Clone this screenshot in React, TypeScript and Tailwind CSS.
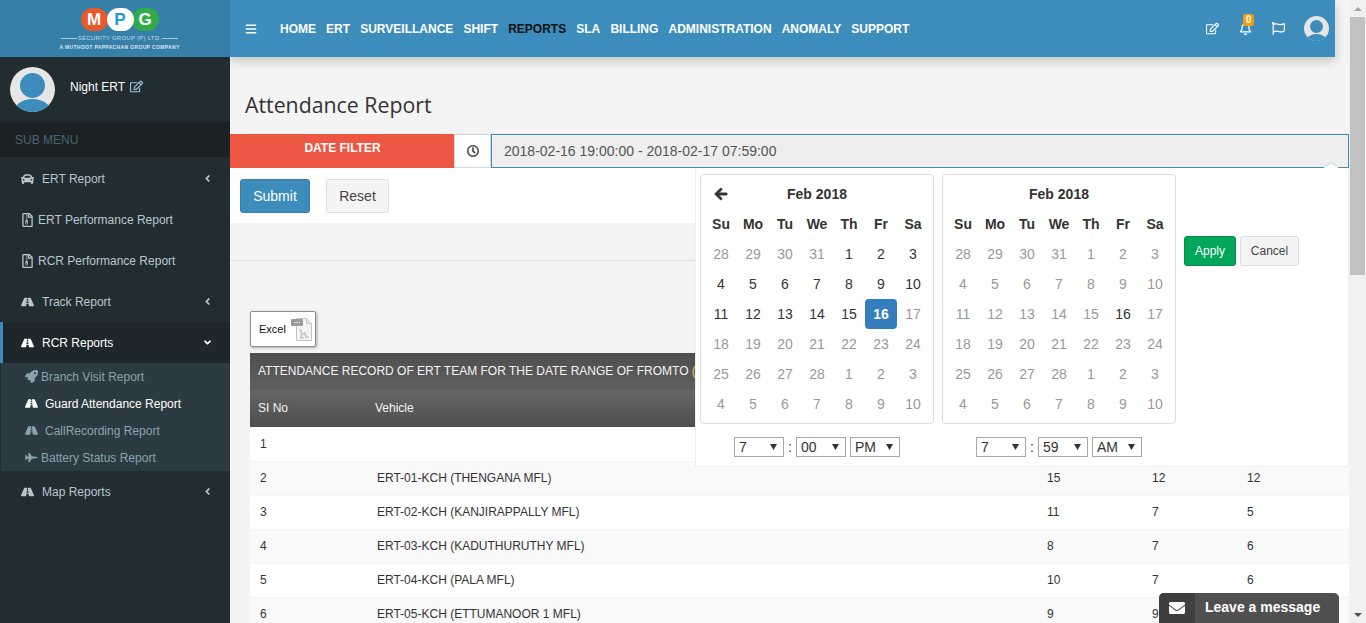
import {
  FaAngleDown,
  FaAngleLeft,
  FaArrowLeft,
  FaBars,
  FaCar,
  FaEnvelope,
  FaFighterJet,
  FaRegBell,
  FaRegClock,
  FaRegEdit,
  FaRegFileArchive,
  FaRegFlag,
  FaRoad,
  FaRocket,
} from "react-icons/fa";

const navItems = ["HOME", "ERT", "SURVEILLANCE", "SHIFT", "REPORTS", "SLA", "BILLING", "ADMINISTRATION", "ANOMALY", "SUPPORT"];

const days = ["Su", "Mo", "Tu", "We", "Th", "Fr", "Sa"];

const calendarCells = [
  28, 29, 30, 31, 1, 2, 3,
  4, 5, 6, 7, 8, 9, 10,
  11, 12, 13, 14, 15, 16, 17,
  18, 19, 20, 21, 22, 23, 24,
  25, 26, 27, 28, 1, 2, 3,
  4, 5, 6, 7, 8, 9, 10,
];

const rows = [
  { no: 1, vehicle: "", a: "", b: "", c: "" },
  { no: 2, vehicle: "ERT-01-KCH (THENGANA MFL)", a: "15", b: "12", c: "12" },
  { no: 3, vehicle: "ERT-02-KCH (KANJIRAPPALLY MFL)", a: "11", b: "7", c: "5" },
  { no: 4, vehicle: "ERT-03-KCH (KADUTHURUTHY MFL)", a: "8", b: "7", c: "6" },
  { no: 5, vehicle: "ERT-04-KCH (PALA MFL)", a: "10", b: "7", c: "6" },
  { no: 6, vehicle: "ERT-05-KCH (ETTUMANOOR 1 MFL)", a: "9", b: "9", c: "7" },
];

function Avatar({ size }: { size: string }) {
  return (
    <div className={`${size} rounded-full bg-[#e6e6e6] overflow-hidden relative shrink-0`}>
      <div className="absolute left-[23%] top-[14%] w-[54%] h-[54%] rounded-full bg-[#3c8dbc]" />
      <div className="absolute left-[8%] top-[70%] w-[84%] h-[60%] rounded-[50%] bg-[#3c8dbc]" />
    </div>
  );
}

function Logo() {
  return (
    <div className="h-[57px] bg-[#367fa9] flex flex-col items-center pt-[8px] pl-[9px] shrink-0">
      <div className="flex items-center font-bold text-[17px] leading-none h-[23px]">
        <span className="w-[27px] h-[23px] rounded-full bg-[#e8582b] text-white flex items-center justify-center -mr-[1px]">M</span>
        <span className="w-[27px] h-[23px] rounded-full bg-white text-[#1b9ad6] flex items-center justify-center z-10">P</span>
        <span className="w-[27px] h-[23px] rounded-full bg-[#32ac4a] text-white flex items-center justify-center -ml-[2px]">G</span>
      </div>
      <div className="mt-[3px] flex items-center gap-[1px] text-[6px] leading-[8px] tracking-[0.25px] text-[#c7dbe8]">
        <span className="w-[16px] h-px bg-[#a9c8dc]" />
        SECURITY GROUP (P) LTD.
        <span className="w-[16px] h-px bg-[#a9c8dc]" />
      </div>
      <div className="mt-[1px] text-[5px] leading-[8px] font-bold tracking-[0.35px] text-[#d9e6ef]">A MUTHOOT PAPPACHAN GROUP COMPANY</div>
    </div>
  );
}

function MenuItem({ icon, label, arrow, active, gap = "gap-[8px]" }: { icon: React.ReactNode; label: string; arrow?: "left" | "down"; active?: boolean; gap?: string }) {
  return (
    <div className={`h-[41px] flex items-center pr-[17px] pl-[18px] ${gap} border-l-[3px] ${active ? "bg-[#1e282c] border-[#3c8dbc] text-white" : "border-transparent text-[#b8c7ce]"} text-[12px]`}>
      <span className="w-[13px] flex justify-center text-[14px]">{icon}</span>
      <span className="flex-1">{label}</span>
      {arrow === "left" && <FaAngleLeft className="text-[11px]" />}
      {arrow === "down" && <FaAngleDown className="text-[11px]" />}
    </div>
  );
}

function SubItem({ icon, label, active, textGap }: { icon: React.ReactNode; label: string; active?: boolean; textGap: string }) {
  return (
    <div className={`h-[27px] flex items-center pl-[24px] text-[12px] ${active ? "text-white" : "text-[#8aa4af]"}`}>
      <span className={`w-[13px] flex justify-center text-[13px] ${textGap}`}>{icon}</span>
      {label}
    </div>
  );
}

function Sidebar() {
  return (
    <aside className="w-[230px] shrink-0 bg-[#222d32] flex flex-col">
      <Logo />
      <div className="h-[65px] flex items-center pl-[10px] shrink-0">
        <Avatar size="w-[45px] h-[45px]" />
        <span className="ml-[15px] -mt-[6px] text-white text-[12px] flex items-center gap-[5px]">
          Night ERT <FaRegEdit className="text-[13px] text-[#9fc4dc]" />
        </span>
      </div>
      <div className="h-[35px] bg-[#1a2226] flex items-center pl-[15px] text-[12px] text-[#4b646f] shrink-0">SUB MENU</div>
      <div className="pt-px">
        <MenuItem icon={<FaCar />} label="ERT Report" arrow="left" />
        <MenuItem icon={<FaRegFileArchive />} label="ERT Performance Report" gap="gap-[4px]" />
        <MenuItem icon={<FaRegFileArchive />} label="RCR Performance Report" gap="gap-[4px]" />
        <MenuItem icon={<FaRoad />} label="Track Report" arrow="left" />
        <MenuItem icon={<FaRoad />} label="RCR Reports" arrow="down" active />
        <div className="bg-[#2c3b41] ml-px">
          <SubItem icon={<FaRocket />} label="Branch Visit Report" textGap="mr-[3px]" />
          <SubItem icon={<FaRoad />} active label="Guard Attendance Report" textGap="mr-[7px]" />
          <SubItem icon={<FaRoad />} label="CallRecording Report" textGap="mr-[7px]" />
          <SubItem icon={<FaFighterJet />} label="Battery Status Report" textGap="mr-[3px]" />
        </div>
        <MenuItem icon={<FaRoad />} label="Map Reports" arrow="left" />
      </div>
    </aside>
  );
}

function Header() {
  return (
    <header className="h-[57px] mr-[14px] bg-[#3c8dbc] shadow-[0_4px_10px_rgba(0,0,0,0.2)] flex items-center shrink-0 relative z-10 text-white">
      <FaBars className="ml-[15px] text-[12px]" />
      <nav className="ml-[23px] flex gap-[10.1px] text-[12px] font-bold">
        {navItems.map((item) => (
          <span key={item} className={item === "REPORTS" ? "text-[#111]" : ""}>
            {item}
          </span>
        ))}
      </nav>
      <div className="ml-auto flex items-center mr-[6px]">
        <FaRegEdit className="text-[13px]" />
        <div className="relative ml-[20px]">
          <FaRegBell className="text-[13px]" />
          <span className="absolute -top-[8px] left-[4px] w-[11px] h-[12px] rounded-[2px] bg-[#f39c12] text-[10px] leading-[12px] text-center font-bold">0</span>
        </div>
        <FaRegFlag className="ml-[20px] text-[13px]" />
        <div className="ml-[19px]">
          <Avatar size="w-[25px] h-[25px]" />
        </div>
      </div>
    </header>
  );
}

function Calendar({ side }: { side: "left" | "right" }) {
  return (
    <div className="w-[234px] h-[250px] border border-[#dddddd] rounded-[4px] px-[4px] pt-[4px] bg-white">
      <div className="grid grid-cols-7 text-center text-[14px] text-[#333]">
        <div className="h-[30px] flex items-center justify-center">
          {side === "left" && <FaArrowLeft className="text-[14px]" strokeWidth={30} />}
        </div>
        <div className="col-span-5 h-[30px] leading-[30px] font-bold">Feb 2018</div>
        <div />
        {days.map((d) => (
          <div key={d} className="h-[30px] leading-[30px] font-bold">
            {d}
          </div>
        ))}
        {calendarCells.map((n, i) => {
          const isLeft = side === "left";
          const active = isLeft && i === 19;
          const muted = isLeft ? i < 4 || i > 19 : i !== 19;
          return (
            <div key={i} className={`h-[30px] leading-[30px] rounded-[4px] ${active ? "bg-[#357ebd] text-white font-bold" : muted ? "text-[#999999]" : "text-[#333]"}`}>
              {n}
            </div>
          );
        })}
      </div>
    </div>
  );
}

function TimeSelect({ value, options }: { value: string; options: string[] }) {
  return (
    <div className="relative w-[50px] h-[20px]">
      <select defaultValue={value} className="block w-full h-full appearance-none border border-[#a9a9a9] bg-white pl-[4px] text-[14px] leading-[18px] text-[#333] outline-none">
        {options.map((o) => (
          <option key={o}>{o}</option>
        ))}
      </select>
      <svg viewBox="0 0 7 6" className="absolute right-[7px] top-[7px] w-[7px] h-[6px] fill-[#333] pointer-events-none">
        <path d="M0 0h7L3.5 6z" />
      </svg>
    </div>
  );
}

function TimeRow({ hour, minute, ampm }: { hour: string; minute: string; ampm: string }) {
  return (
    <div className="flex items-center w-[234px] justify-center h-[20px]">
      <TimeSelect value={hour} options={[hour]} />
      <span className="w-[12px] text-center text-[14px] leading-[20px] text-[#333]">:</span>
      <TimeSelect value={minute} options={[minute]} />
      <span className="w-[4px]" />
      <TimeSelect value={ampm} options={[ampm]} />
    </div>
  );
}

function DatePicker() {
  return (
    <div className="absolute left-[465px] top-[168px] w-[654px] h-[299px] bg-white border border-[#eeeeee] border-t-0 pt-[6px] pl-[4px] z-20">
      <div className="absolute -top-[6px] right-[9px] w-0 h-0 border-x-[8px] border-x-transparent border-b-[6px] border-b-[#cccccc]" />
      <div className="absolute -top-[5px] right-[10px] w-0 h-0 border-x-[7px] border-x-transparent border-b-[5px] border-b-white" />
      <div className="flex items-start">
        <div className="flex gap-[8px]">
          <Calendar side="left" />
          <Calendar side="right" />
        </div>
        <div className="ml-[8px] mt-[62px] flex gap-[4px] text-[12px]">
          <button className="w-[52px] h-[30px] rounded-[3px] bg-[#00a65a] border border-[#008d4c] text-white">Apply</button>
          <button className="w-[59px] h-[30px] rounded-[3px] bg-[#f4f4f4] border border-[#dddddd] text-[#444]">Cancel</button>
        </div>
      </div>
      <div className="flex gap-[8px] mt-[13px]">
        <TimeRow hour="7" minute="00" ampm="PM" />
        <TimeRow hour="7" minute="59" ampm="AM" />
      </div>
    </div>
  );
}

function ReportTable() {
  return (
    <table className="w-[1099px] table-fixed border-collapse text-[12px] text-[#333]">
      <colgroup>
        <col className="w-[117px]" />
        <col className="w-[670px]" />
        <col className="w-[105px]" />
        <col className="w-[95px]" />
        <col />
      </colgroup>
      <thead className="text-[#f4f4f4]">
        <tr className="h-[37px] bg-gradient-to-b from-[#4e4e4e] to-[#606060]">
          <th colSpan={5} className="px-[8px] pb-[2px] text-left font-normal whitespace-nowrap overflow-hidden">
            ATTENDANCE RECORD OF ERT TEAM FOR THE DATE RANGE OF FROMTO <span className="text-[#f0c040]">(</span>
          </th>
        </tr>
        <tr className="h-[37px] bg-gradient-to-b from-[#666666] to-[#4e4e4e] text-left">
          <th className="px-[8px] pb-[2px] font-normal">SI No</th>
          <th className="px-[8px] pb-[2px] font-normal">Vehicle</th>
          <th />
          <th />
          <th />
        </tr>
      </thead>
      <tbody>
        {rows.map((row, i) => (
          <tr key={row.no} className={`h-[34px] border-b border-[#f4f4f4] ${i % 2 === 0 ? "bg-white" : "bg-[#f9f9f9]"}`}>
            <td className="px-[10px]">{row.no}</td>
            <td className="px-[10px]">{row.vehicle}</td>
            <td className="px-[10px]">{row.a}</td>
            <td className="px-[10px]">{row.b}</td>
            <td className="px-[10px]">{row.c}</td>
          </tr>
        ))}
      </tbody>
    </table>
  );
}

function ExcelIcon() {
  return (
    <svg viewBox="0 0 21 24" className="w-[21px] h-[24px] shrink-0">
      <path d="M5.5 1.5h10l5 5v17h-15z" fill="#f4f4f4" stroke="#c4c4c4" />
      <path d="M15.5 1.5v5h5" fill="#e4e4e4" stroke="#c4c4c4" />
      <rect x="0" y="2" width="12" height="7" rx="1" fill="#9a9a9a" />
      <path d="M3 5.5h6" stroke="#eeeeee" strokeDasharray="1.5 1" />
      <path d="M9 12l2 5 3-1 1 4 3 0M11 17l-1 4h3" fill="none" stroke="#c4c4c4" strokeWidth="1.5" />
    </svg>
  );
}

function Content() {
  return (
    <main className="flex-1 relative overflow-hidden bg-[#f4f4f4]">
      <Header />
      <h1 className="h-[76px] pl-[15px] pt-[33px] text-[21.3px] leading-[30px] text-[#333]" style={{ fontFamily: '"Open Sans", sans-serif' }}>
        Attendance Report
      </h1>
      <section className="bg-white h-[90px] border-t border-[#eeeeee]">
        <div className="flex h-[34px] text-[14px]">
          <div className="w-[224px] bg-[#ec5744] text-white font-bold text-[12px] text-center pt-[5px] pl-[1px]">DATE FILTER</div>
          <div className="w-[37px] border border-[#d2d6de] flex items-center justify-center text-[12px] text-[#444]">
            <FaRegClock strokeWidth={20} />
          </div>
          <div className="flex-1 border border-[#3c8dbc] bg-[#eeeeee] flex items-center pl-[12px] text-[#555]">2018-02-16 19:00:00 - 2018-02-17 07:59:00</div>
        </div>
        <div className="flex pl-[10px] mt-[11px] gap-[16px] text-[14px]">
          <button className="w-[70px] h-[34px] rounded-[3px] bg-[#3c8dbc] border border-[#367fa9] text-white">Submit</button>
          <button className="w-[63px] h-[34px] rounded-[3px] bg-[#f4f4f4] border border-[#dddddd] text-[#444]">Reset</button>
        </div>
      </section>
      <div className="h-[38px] border-b border-[#dddddd]" />
      <div className="pl-[20px] pt-[50px]">
        <button className="w-[66px] h-[36px] bg-white border border-[#8c8c8c] rounded-[2px] shadow-[1px_1px_3px_rgba(0,0,0,0.3)] flex items-center pl-[8px] gap-[5px] text-[11px] text-[#111] mb-[6px]">
          Excel
          <ExcelIcon />
        </button>
        <ReportTable />
      </div>
      <DatePicker />
      <div className="absolute left-[929px] top-[593px] w-[180px] h-[40px] rounded-t-[5px] bg-[#505050] flex z-30 text-white">
        <div className="w-[36px] h-full bg-[#3f3f3f] rounded-tl-[5px] flex items-center justify-center">
          <FaEnvelope className="text-[16px] mb-[10px]" />
        </div>
        <span className="pl-[10px] pt-[4px] text-[14px] font-bold">Leave a message</span>
      </div>
    </main>
  );
}

function Scrollbar() {
  return (
    <div className="w-[17px] shrink-0 bg-[#f1f1f1] flex flex-col items-center">
      <div className="h-[17px] flex items-center justify-center">
        <div className="w-0 h-0 border-x-[4px] border-x-transparent border-b-[4px] border-b-[#a3a3a3]" />
      </div>
      <div className="w-[15px] h-[258px] bg-[#c1c1c1]" />
      <div className="flex-1" />
      <div className="h-[17px] flex items-center justify-center">
        <div className="w-0 h-0 border-x-[4px] border-x-transparent border-t-[4px] border-t-[#505050]" />
      </div>
    </div>
  );
}

export default function App() {
  return (
    <div className="h-[623px] w-[1366px] flex overflow-hidden" style={{ fontFamily: '"Liberation Sans", Arial, sans-serif' }}>
      <Sidebar />
      <Content />
      <Scrollbar />
    </div>
  );
}
